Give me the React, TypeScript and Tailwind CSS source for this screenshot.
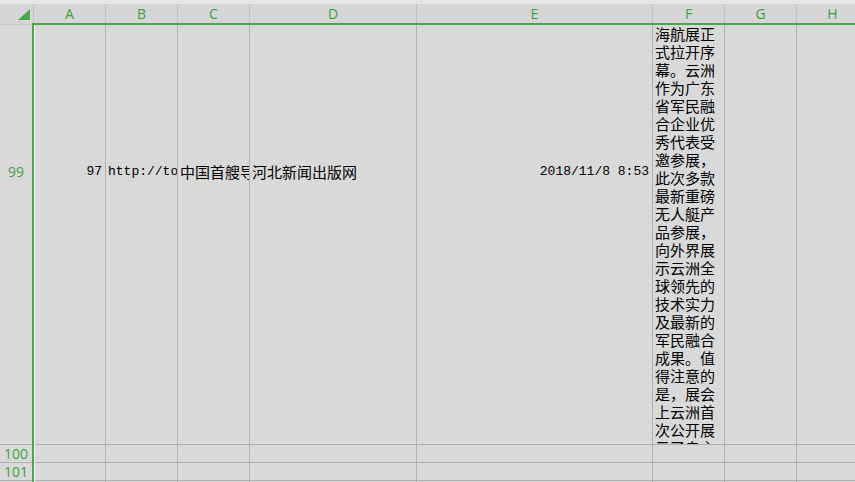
import React from "react";

const fLines = [
  "海航展正",
  "式拉开序",
  "幕。云洲",
  "作为广东",
  "省军民融",
  "合企业优",
  "秀代表受",
  "邀参展，",
  "此次多款",
  "最新重磅",
  "无人艇产",
  "品参展，",
  "向外界展",
  "示云洲全",
  "球领先的",
  "技术实力",
  "及最新的",
  "军民融合",
  "成果。值",
  "得注意的",
  "是，展会",
  "上云洲首",
  "次公开展",
  "示了自主",
];

function EmptyRow({ h }: { h: string }) {
  return (
    <div className={`flex border-b border-[#b1b1b1] ${h}`}>
      <div className="w-[71px] shrink-0 border-r border-[#b1b1b1]" />
      <div className="w-[72px] shrink-0 border-r border-[#b1b1b1]" />
      <div className="w-[72px] shrink-0 border-r border-[#b1b1b1]" />
      <div className="w-[167px] shrink-0 border-r border-[#b1b1b1]" />
      <div className="w-[236px] shrink-0 border-r border-[#b1b1b1]" />
      <div className="w-[72px] shrink-0 border-r border-[#b1b1b1]" />
      <div className="w-[72px] shrink-0 border-r border-[#b1b1b1]" />
      <div className="w-[72px] shrink-0 border-r border-[#b1b1b1]" />
    </div>
  );
}

export default function App() {
  const hdr = "shrink-0 border-r border-[#c3c3c3] flex items-center justify-center";
  return (
    <div className="w-[855px] h-[482px] overflow-hidden bg-[#d9d9d9] text-black">
      {/* top strip */}
      <div className="h-[4px] bg-[#e6e6e6]" />
      {/* column header */}
      <div className="flex h-[19px] bg-[#d6d6d6] text-[14px] leading-none text-[#3c9f3c] font-['Open_Sans',sans-serif]">
        <div className="w-[34px] shrink-0 border-r border-[#c3c3c3] flex items-end justify-end pr-[3px] pb-[3px]">
          <svg width="12" height="11" viewBox="0 0 12 11">
            <polygon points="12,0 12,11 0,11" fill="#4aa84a" />
          </svg>
        </div>
        <div className={`w-[72px] ${hdr}`}>A</div>
        <div className={`w-[72px] ${hdr}`}>B</div>
        <div className={`w-[72px] ${hdr}`}>C</div>
        <div className={`w-[167px] ${hdr}`}>D</div>
        <div className={`w-[236px] ${hdr}`}>E</div>
        <div className={`w-[72px] ${hdr}`}>F</div>
        <div className={`w-[72px] ${hdr}`}>G</div>
        <div className={`w-[72px] ${hdr}`}>H</div>
      </div>
      {/* green top line */}
      <div className="flex h-[2px]">
        <div className="w-[32px] shrink-0 bg-[#d6d6d6] border-b border-[#c8c8c8]" />
        <div className="flex-1 bg-[#4aa84a]" />
      </div>
      {/* body */}
      <div className="flex">
        <div className="w-[32px] shrink-0 flex flex-col text-[14px] text-[#3c9f3c] font-['Open_Sans',sans-serif] leading-none">
          <div className="h-[420px] border-b border-[#b1b1b1] flex items-start justify-center pt-[140px]">99</div>
          <div className="h-[18px] border-b border-[#b1b1b1] flex items-center justify-center">100</div>
          <div className="h-[18px] border-b border-[#b1b1b1] flex items-center justify-center">101</div>
          <div className="h-[18px] border-b border-[#b1b1b1]" />
        </div>
        <div className="w-[2px] shrink-0 bg-[#4aa84a]" />
        <div className="flex-1 border-l border-white flex flex-col">
          {/* row 99 */}
          <div className="flex h-[420px] border-b border-[#b1b1b1] leading-[18px]">
            <div className="w-[71px] shrink-0 border-r border-[#b1b1b1] pt-[138px] pr-[3px] text-right font-['Liberation_Mono',monospace] text-[13px]">
              97
            </div>
            <div className="w-[72px] shrink-0 border-r border-[#b1b1b1] pt-[138px] pl-[2px] overflow-hidden whitespace-nowrap font-['Liberation_Mono',monospace] text-[13px]">
              http://toutiao.com
            </div>
            <div className="w-[72px] shrink-0 border-r border-[#b1b1b1] pt-[138px] pl-[2px] overflow-hidden whitespace-nowrap font-['Noto_Sans_CJK_SC',sans-serif] text-[15px]">
              中国首艘导
            </div>
            <div className="w-[167px] shrink-0 border-r border-[#b1b1b1] pt-[138px] pl-[2px] overflow-hidden whitespace-nowrap font-['Noto_Sans_CJK_SC',sans-serif] text-[15px]">
              河北新闻出版网
            </div>
            <div className="w-[236px] shrink-0 border-r border-[#b1b1b1] pt-[138px] pr-[3px] text-right font-['Liberation_Mono',monospace] text-[13px]">
              2018/11/8 8:53
            </div>
            <div className="w-[72px] shrink-0 border-r border-[#b1b1b1] pl-[2px] overflow-hidden whitespace-nowrap font-['Noto_Sans_CJK_SC',sans-serif] text-[15px]">
              {fLines.map((l, i) => (
                <div key={i} className="h-[18px]">
                  {l}
                </div>
              ))}
            </div>
            <div className="w-[72px] shrink-0 border-r border-[#b1b1b1]" />
            <div className="w-[72px] shrink-0 border-r border-[#b1b1b1]" />
          </div>
          <EmptyRow h="h-[18px]" />
          <EmptyRow h="h-[18px]" />
          <EmptyRow h="h-[18px]" />
        </div>
      </div>
    </div>
  );
}
